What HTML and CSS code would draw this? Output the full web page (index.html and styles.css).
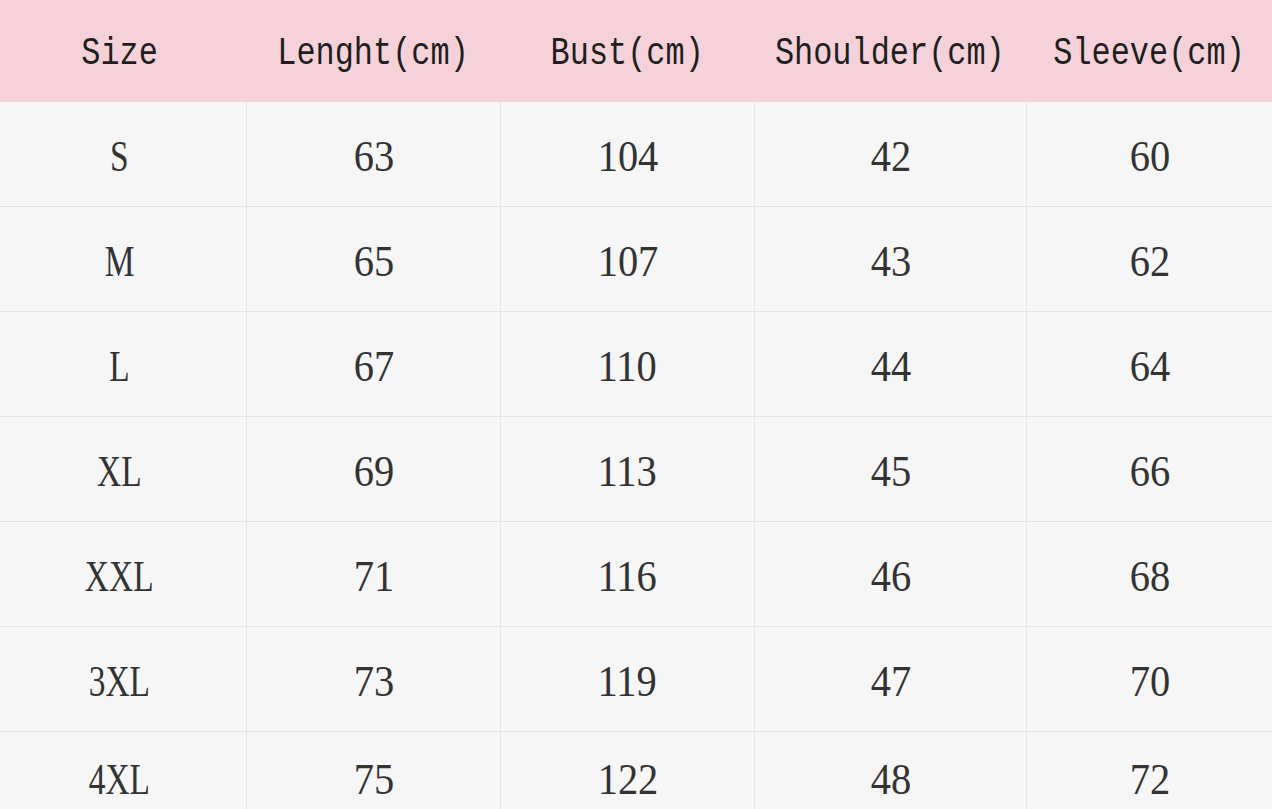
FILE: index.html
```html
<!DOCTYPE html>
<html>
<head>
<meta charset="utf-8">
<link rel="stylesheet" href="styles.css">
</head>
<body>
<div class="chart">
  <div class="row head">
    <div class="cell"><span class="h">Size</span></div>
    <div class="cell"><span class="h">Lenght(cm)</span></div>
    <div class="cell"><span class="h">Bust(cm)</span></div>
    <div class="cell"><span class="h">Shoulder(cm)</span></div>
    <div class="cell"><span class="h">Sleeve(cm)</span></div>
  </div>
  <div class="row"><div class="cell"><span class="v sz">S</span></div><div class="cell"><span class="v">63</span></div><div class="cell"><span class="v">104</span></div><div class="cell"><span class="v">42</span></div><div class="cell"><span class="v">60</span></div></div>
  <div class="row"><div class="cell"><span class="v sz">M</span></div><div class="cell"><span class="v">65</span></div><div class="cell"><span class="v">107</span></div><div class="cell"><span class="v">43</span></div><div class="cell"><span class="v">62</span></div></div>
  <div class="row"><div class="cell"><span class="v sz">L</span></div><div class="cell"><span class="v">67</span></div><div class="cell"><span class="v">110</span></div><div class="cell"><span class="v">44</span></div><div class="cell"><span class="v">64</span></div></div>
  <div class="row"><div class="cell"><span class="v sz">XL</span></div><div class="cell"><span class="v">69</span></div><div class="cell"><span class="v">113</span></div><div class="cell"><span class="v">45</span></div><div class="cell"><span class="v">66</span></div></div>
  <div class="row"><div class="cell"><span class="v sz">XXL</span></div><div class="cell"><span class="v">71</span></div><div class="cell"><span class="v">116</span></div><div class="cell"><span class="v">46</span></div><div class="cell"><span class="v">68</span></div></div>
  <div class="row"><div class="cell"><span class="v sz">3XL</span></div><div class="cell"><span class="v">73</span></div><div class="cell"><span class="v">119</span></div><div class="cell"><span class="v">47</span></div><div class="cell"><span class="v">70</span></div></div>
  <div class="row last"><div class="cell"><span class="v sz">4XL</span></div><div class="cell"><span class="v">75</span></div><div class="cell"><span class="v">122</span></div><div class="cell"><span class="v">48</span></div><div class="cell"><span class="v">72</span></div></div>
</div>
</body>
</html>
```
FILE: styles.css
```css
html, body {
  margin: 0;
  padding: 0;
  background: #f6f6f6;
  overflow: hidden;
}
.chart {
  width: 1272px;
  height: 809px;
  overflow: hidden;
  background: #f6f6f6;
  color: #262626;
}
.row {
  display: grid;
  grid-template-columns: 246px 254px 254px 272px 246px;
  height: 105px;
  box-sizing: border-box;
  border-bottom: 1px solid #e4e4e4;
}
.row.head {
  height: 102px;
  background: #f5d2d9;
  border-bottom: none;
}
.row.last {
  height: 90px;
  border-bottom: none;
}
.cell {
  display: flex;
  align-items: center;
  justify-content: center;
  box-sizing: border-box;
  border-left: 1px solid #e4e4e4;
  padding-top: 6px;
}
.cell:first-child {
  border-left: none;
  padding-right: 7px;
}
.head .cell {
  border-left: none;
  padding-top: 6px;
}
.h {
  display: inline-block;
  font-family: "Liberation Mono", monospace;
  font-size: 38px;
  line-height: 1;
  transform: scaleX(0.84);
  color: #1e1e1e;
}
.v {
  display: inline-block;
  font-family: "Liberation Serif", serif;
  font-size: 44px;
  line-height: 1;
  transform: scaleX(0.92);
  color: #333333;
}
.v.sz {
  transform: scaleX(0.76);
}
```
